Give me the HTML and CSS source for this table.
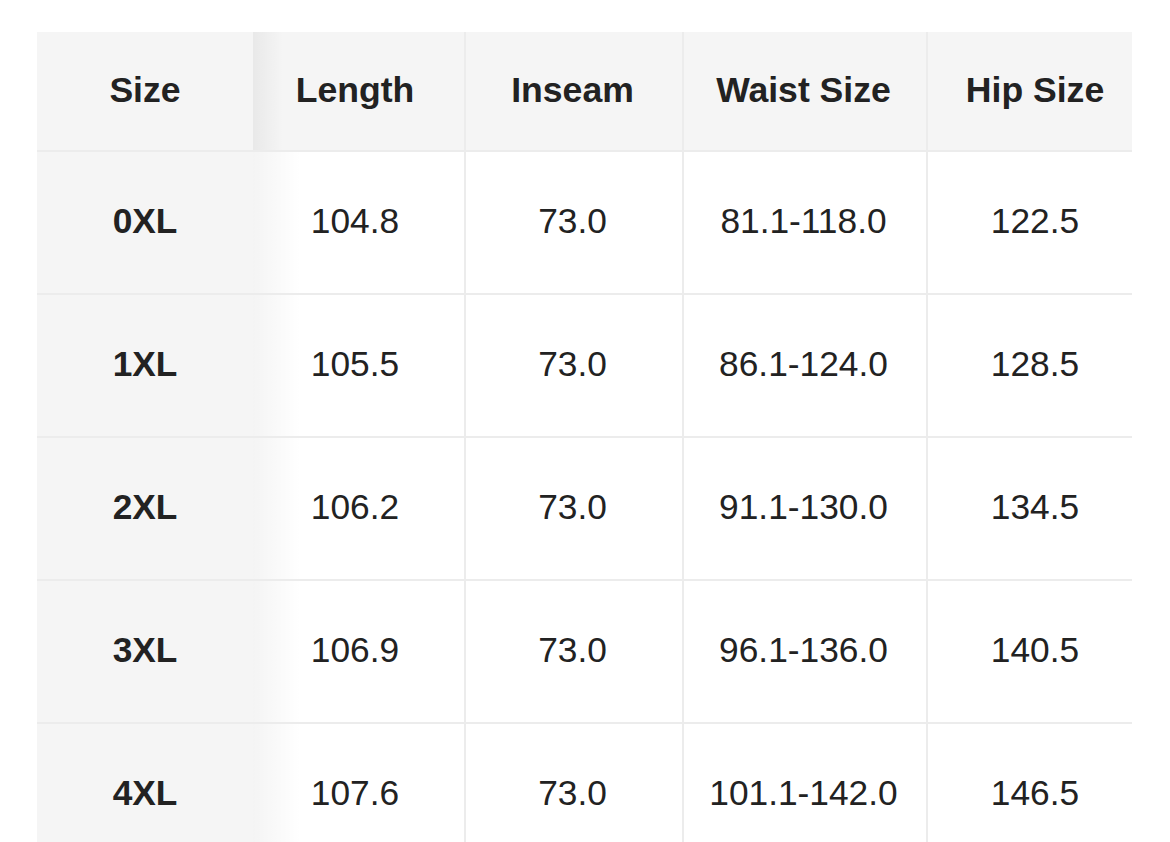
FILE: index.html
```html
<!DOCTYPE html>
<html lang="en">
<head>
<meta charset="utf-8">
<title>Size Chart</title>
<link rel="stylesheet" href="styles.css">
</head>
<body>
<div class="wrap">
  <div class="scroller">
    <table class="size-table">
      <colgroup>
        <col class="c-size">
        <col class="c-length">
        <col class="c-inseam">
        <col class="c-waist">
        <col class="c-hip">
      </colgroup>
      <thead>
        <tr>
          <th class="sticky">Size</th>
          <th class="after-sticky">Length</th>
          <th class="sep">Inseam</th>
          <th class="sep">Waist Size</th>
          <th class="sep hip">Hip Size</th>
        </tr>
      </thead>
      <tbody>
        <tr>
          <td class="sticky">0XL</td>
          <td class="after-sticky">104.8</td>
          <td class="sep">73.0</td>
          <td class="sep">81.1-118.0</td>
          <td class="sep hip">122.5</td>
        </tr>
        <tr>
          <td class="sticky">1XL</td>
          <td class="after-sticky">105.5</td>
          <td class="sep">73.0</td>
          <td class="sep">86.1-124.0</td>
          <td class="sep hip">128.5</td>
        </tr>
        <tr>
          <td class="sticky">2XL</td>
          <td class="after-sticky">106.2</td>
          <td class="sep">73.0</td>
          <td class="sep">91.1-130.0</td>
          <td class="sep hip">134.5</td>
        </tr>
        <tr>
          <td class="sticky">3XL</td>
          <td class="after-sticky">106.9</td>
          <td class="sep">73.0</td>
          <td class="sep">96.1-136.0</td>
          <td class="sep hip">140.5</td>
        </tr>
        <tr>
          <td class="sticky">4XL</td>
          <td class="after-sticky">107.6</td>
          <td class="sep">73.0</td>
          <td class="sep">101.1-142.0</td>
          <td class="sep hip">146.5</td>
        </tr>
      </tbody>
    </table>
  </div>
</div>
</body>
</html>
```

FILE: styles.css
```css
html, body {
  margin: 0;
  padding: 0;
  background: #ffffff;
}

body {
  font-family: "Liberation Sans", Arial, Helvetica, sans-serif;
  color: #222222;
  overflow: hidden;
}

.wrap {
  padding: 32px 0 0 37px;
}

.scroller {
  width: 1095px;
  overflow: hidden;
}

.size-table {
  border-collapse: separate;
  border-spacing: 0;
  table-layout: fixed;
  width: 1105px;
}

.c-size { width: 216px; }
.c-length { width: 211px; }
.c-inseam { width: 218px; }
.c-waist { width: 244px; }
.c-hip { width: 216px; }

.size-table th,
.size-table td {
  box-sizing: border-box;
  padding: 0;
  text-align: center;
  vertical-align: middle;
  border-bottom: 2px solid #ececec;
}

.size-table th {
  height: 120px;
  font-size: 35.6px;
  font-weight: bold;
  background: #f5f5f5;
  padding-bottom: 2px;
}

.size-table td {
  height: 143px;
  font-size: 35.3px;
  font-weight: normal;
  background: #ffffff;
  padding-bottom: 4px;
}

.size-table .sticky {
  background: #f5f5f5;
  font-weight: bold;
}

.size-table .after-sticky {
  padding-right: 7px;
}

.size-table td.after-sticky {
  background: linear-gradient(to right, rgba(0, 0, 0, 0.045), rgba(0, 0, 0, 0) 48px), #ffffff;
}

.size-table th.after-sticky {
  background: linear-gradient(to right, rgba(0, 0, 0, 0.05), rgba(0, 0, 0, 0) 30px), #f5f5f5;
}

.size-table .sep {
  border-left: 2px solid #ececec;
  padding-right: 3px;
}

.size-table .hip {
  padding-right: 0;
}
```
